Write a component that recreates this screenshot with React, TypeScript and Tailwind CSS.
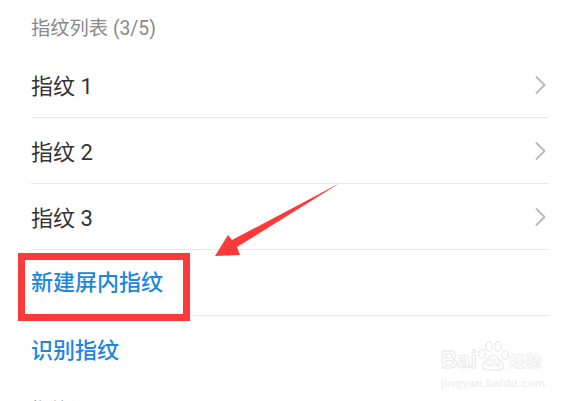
const fingerprints = ["指纹 1", "指纹 2", "指纹 3"];

function Chevron() {
  return (
    <svg className="mr-[3px]" width="11" height="20" viewBox="0 0 11 20" fill="none" stroke="#bababa" strokeWidth="2">
      <polyline points="1,1.5 9.5,10 1,18.5" />
    </svg>
  );
}

export default function App() {
  return (
    <div className="relative h-[401px] w-[575px] overflow-hidden bg-white font-['Roboto','Noto_Sans_CJK_SC',sans-serif]">
      <div className="ml-[31px] w-[518px]">
        <div className="h-[52px] pt-[15px] text-[19.3px] leading-[28px] text-[#8a8a8a]">指纹列表 (3/5)</div>

        {fingerprints.map((name) => (
          <div key={name} className="h-[66px] flex items-center justify-between border-b-[1.5px] border-[#e9e9e9]">
            <span className="pt-[3px] text-[22px] text-[#333333]">{name}</span>
            <Chevron />
          </div>
        ))}

        <div className="h-[66px] flex items-center border-b-[1.5px] border-[#e9e9e9]">
          <span className="text-[22px] font-medium text-[#1b87e4]">新建屏内指纹</span>
        </div>
        <div className="h-[66px] flex items-center">
          <span className="pt-[2px] text-[22px] font-medium text-[#1b87e4]">识别指纹</span>
        </div>

        <div className="pt-[15px] text-[19.3px] leading-[28px] text-[#8a8a8a]">指纹设置</div>
      </div>

      {/* red highlight box */}
      <div className="absolute left-[18px] top-[253px] w-[172px] h-[68px] border-[7px] border-[#fd3a3a]" />

      {/* red arrow */}
      <svg className="absolute left-0 top-0" width="575" height="401" viewBox="0 0 575 401">
        <polygon points="340,183 237,247 240,255 215,256 228,235 232,240" fill="#fd3a3a" />
      </svg>

      {/* watermark */}
      <div className="absolute left-[441px] top-[339px] flex flex-col text-white">
        <div className="flex items-end h-[34px]">
          <span className="text-[23px] leading-[26px] font-['Liberation_Sans',sans-serif] font-bold [-webkit-text-stroke:1px_#e9e9e9]">Bai</span>
          <div className="relative w-[32px] h-[32px] flex items-end justify-center">
            <svg className="absolute inset-0" width="32" height="32" viewBox="0 0 32 32" fill="none" stroke="#e9e9e9" strokeWidth="1.2">
              <ellipse cx="5" cy="13" rx="3.2" ry="4.5" />
              <ellipse cx="12" cy="5.5" rx="3.2" ry="4.8" />
              <ellipse cx="21" cy="5.5" rx="3.2" ry="4.8" />
              <ellipse cx="28" cy="14" rx="3.2" ry="4.5" />
              <path d="M16 14c-4 0-5 3-8 6-3 3-3 9 3 9 3 0 7-1 10 0 5 1 7-5 3-9-3-2-4-6-8-6z" />
            </svg>
            <span className="relative mb-[3px] text-[13px] leading-[16px] font-['Liberation_Sans',sans-serif] font-bold [-webkit-text-stroke:0.6px_#e9e9e9]">du</span>
          </div>
          <span className="ml-[1px] text-[16px] leading-[22px] font-bold [-webkit-text-stroke:0.5px_#e9e9e9]">经验</span>
        </div>
        <span className="mt-[3px] text-[11.5px] leading-[14px] tracking-[0.2px] font-['Liberation_Sans',sans-serif] font-bold text-[#f0f0f0]">jingyan.baidu.com</span>
      </div>
    </div>
  );
}
